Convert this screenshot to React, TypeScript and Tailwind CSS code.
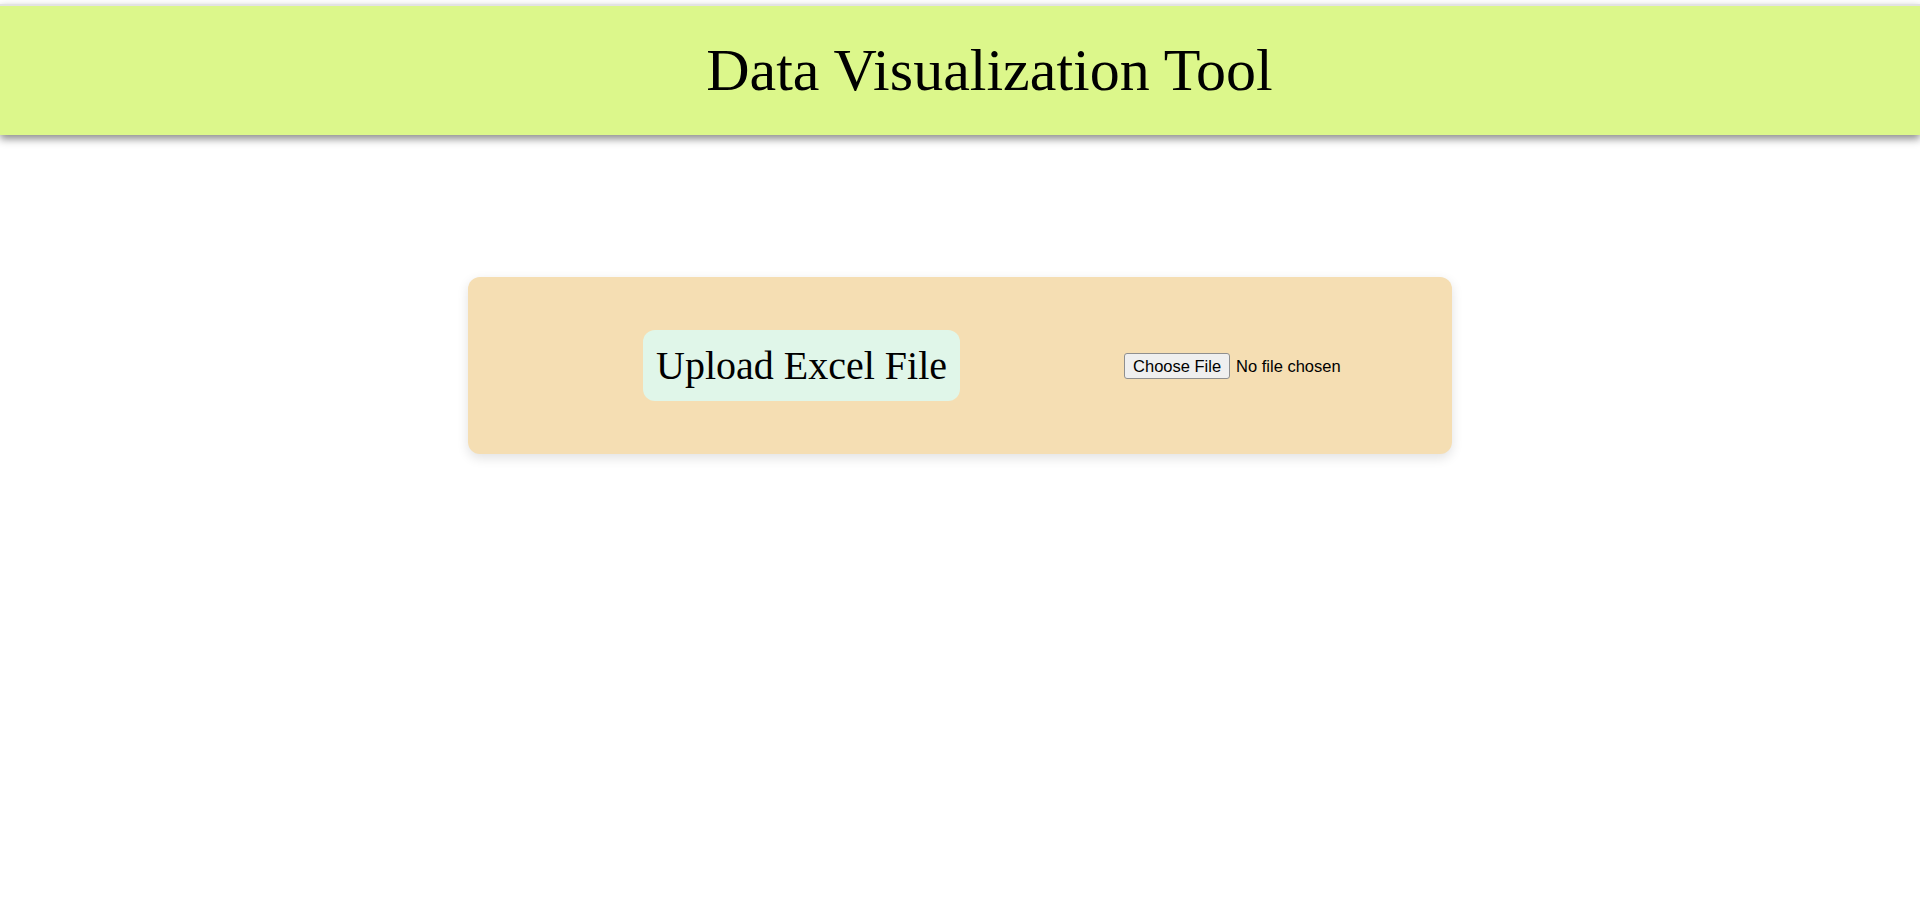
export default function App() {
    return (
        <div className="min-h-[907px] bg-white font-['Liberation_Serif',serif] text-black">
            {/* header bar */}
            <header className="mt-[4px] border-t-2 border-[#e3e3e3] bg-[#dcf78b] h-[131px] flex items-center shadow-[0_4px_8px_rgba(0,0,0,0.45)]">
                <h1 className="w-full pl-[59px] text-center text-[60px] leading-[67px] font-normal">
                    Data Visualization Tool
                </h1>
            </header>

            <main className="flex justify-center pt-[142px]">
                <div className="w-[984px] h-[177px] bg-[#f5deb3] rounded-xl shadow-[0_4px_12px_rgba(0,0,0,0.12)] flex items-center pl-[175px] gap-[164px]">
                    <div className="bg-[#e0f6e9] rounded-xl px-[13px] py-3 text-[40px] leading-[47px]">
                        Upload Excel File
                    </div>
                    <input
                        type="file"
                        accept=".xlsx,.xls"
                        className="font-['Liberation_Sans',Arial,sans-serif] text-[16.5px] leading-[18px] file:bg-[#efefef] file:border file:border-[#8f8f8f] file:rounded-[3px] file:px-[8px] file:py-[3px] file:mr-[6px] file:text-black"
                    />
                </div>
            </main>
        </div>
    )
}
